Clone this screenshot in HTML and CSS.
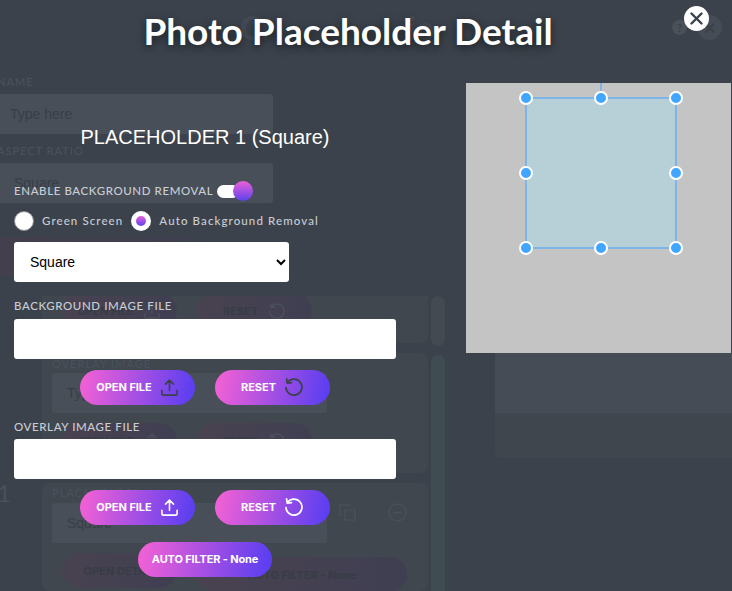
FILE: index.html
```html
<!DOCTYPE html>
<html lang="en">
<head>
<meta charset="utf-8">
<title>Photo Placeholder Detail</title>
<link rel="stylesheet" href="styles.css">
</head>
<body>
<div class="backdrop" aria-hidden="true">
  <div class="bg-top">
    <span class="bg-title">Cr<span class="bg-title-gap"></span>io</span>
    <span class="bg-help">?</span>
    <span class="bg-close">✕</span>
  </div>
  <div class="bg-main">
    <div class="bg-left">
      <div class="bg-label">NAME</div>
      <div class="bg-field bg-field-short">Type here</div>
      <div class="bg-label bg-label-gap">ASPECT RATIO</div>
      <div class="bg-field bg-field-short bg-select">Square</div>
      <div class="bg-pill bg-pill-wide"></div>
      <div class="bg-list">
        <div class="bg-num">1</div>
        <div class="bg-cards">
          <div class="bg-card bg-card-first">
            <div class="bg-pills bg-pills-first">
              <span class="bg-pill bg-pill-sm">OPEN FILE
                <svg class="bg-icon" width="18" height="18" viewBox="0 0 20 20"><path d="M10 13V2.500M5.800 6.500L10 2.200l4.200 4.300M2 13v3.200c0 1 .8 1.800 1.800 1.800h12.400c1 0 1.800-.8 1.800-1.800V13"/></svg>
              </span>
              <span class="bg-pill bg-pill-sm">RESET
                <svg class="bg-icon" width="18" height="18" viewBox="0 0 20 20"><path d="M3.400 5.600A8 8 0 1 1 2 10.500M2.600 1.800l.6 4.300 4.300-.5"/></svg>
              </span>
            </div>
          </div>
          <div class="bg-card bg-card-second">
            <div class="bg-label bg-label-second">OVERLAY IMAGE</div>
            <div class="bg-field bg-field-card">Type here</div>
            <div class="bg-pills">
              <span class="bg-pill bg-pill-sm">OPEN FILE
                <svg class="bg-icon" width="18" height="18" viewBox="0 0 20 20"><path d="M10 13V2.500M5.800 6.500L10 2.200l4.200 4.300M2 13v3.200c0 1 .8 1.800 1.800 1.800h12.400c1 0 1.800-.8 1.800-1.800V13"/></svg>
              </span>
              <span class="bg-pill bg-pill-sm">RESET
                <svg class="bg-icon" width="18" height="18" viewBox="0 0 20 20"><path d="M3.400 5.600A8 8 0 1 1 2 10.500M2.600 1.800l.6 4.300 4.300-.5"/></svg>
              </span>
            </div>
          </div>
          <div class="bg-card bg-card-third">
            <div class="bg-label bg-label-third">PLACEHOLDER</div>
            <div class="bg-field-row">
              <div class="bg-field bg-field-card">Square</div>
              <svg class="bg-icon" width="19" height="19" viewBox="0 0 19 19"><path d="M7 7h10v10H7zM12 3.500V2H2v10h1.500"/></svg>
              <svg class="bg-icon" width="19" height="19" viewBox="0 0 19 19"><circle cx="9.500" cy="9.500" r="8.500"/><path d="M5.500 9.500h8"/></svg>
            </div>
            <div class="bg-pills">
              <span class="bg-pill bg-pill-sm">OPEN DETAIL</span>
              <span class="bg-pill bg-pill-lg">AUTO FILTER - None</span>
            </div>
          </div>
        </div>
        <div class="bg-scroll">
          <div class="bg-scroll-top"></div>
          <div class="bg-scroll-thumb"></div>
        </div>
      </div>
    </div>
    <div class="bg-right">
      <div class="bg-panel"><div class="bg-panel-top"></div></div>
    </div>
  </div>
</div>

<main class="modal">
  <header class="modal-head">
    <h1 class="modal-title">Photo Placeholder Detail</h1>
    <button class="close" type="button" aria-label="Close">
      <svg width="13" height="13" viewBox="0 0 13 13"><path d="M1.500 1.500l10 10M11.500 1.500l-10 10" fill="none" stroke="#3b424c" stroke-width="2.400" stroke-linecap="round"/></svg>
    </button>
  </header>
  <div class="modal-body">
    <section class="form">
      <h2 class="form-title">PLACEHOLDER 1 (Square)</h2>
      <div class="toggle-row">
        <span class="label">ENABLE BACKGROUND REMOVAL</span>
        <span class="toggle"><span class="toggle-knob"></span></span>
      </div>
      <div class="radio-row">
        <span class="radio"></span><span class="radio-text">Green Screen</span>
        <span class="radio radio-on"><span class="radio-dot"></span></span><span class="radio-text">Auto Background Removal</span>
      </div>
      <select class="select"><option>Square</option></select>
      <div class="label label-file">BACKGROUND IMAGE FILE</div>
      <input class="file-input" type="text">
      <div class="btn-row">
        <button class="btn btn-open" type="button">OPEN FILE
          <svg class="icon" width="19" height="19" viewBox="0 0 20 20"><path d="M10 13V2.500M5.800 6.500L10 2.200l4.200 4.300M2 13v3.200c0 1 .8 1.800 1.800 1.800h12.400c1 0 1.800-.8 1.800-1.800V13" fill="none" stroke="#3b424c" stroke-width="1.700" stroke-linecap="round" stroke-linejoin="round"/></svg>
        </button>
        <button class="btn btn-reset" type="button">RESET
          <svg class="icon" width="20" height="20" viewBox="0 0 20 20"><path d="M3.400 5.600A8 8 0 1 1 2 10.500M2.600 1.800l.6 4.300 4.300-.5" fill="none" stroke="#3b424c" stroke-width="1.700" stroke-linecap="round" stroke-linejoin="round"/></svg>
        </button>
      </div>
      <div class="label label-overlay">OVERLAY IMAGE FILE</div>
      <input class="file-input" type="text">
      <div class="btn-row">
        <button class="btn btn-open" type="button">OPEN FILE
          <svg class="icon" width="19" height="19" viewBox="0 0 20 20"><path d="M10 13V2.500M5.800 6.500L10 2.200l4.200 4.300M2 13v3.200c0 1 .8 1.800 1.800 1.800h12.400c1 0 1.800-.8 1.800-1.800V13" fill="none" stroke="#fff" stroke-width="1.700" stroke-linecap="round" stroke-linejoin="round"/></svg>
        </button>
        <button class="btn btn-reset" type="button">RESET
          <svg class="icon" width="20" height="20" viewBox="0 0 20 20"><path d="M3.400 5.600A8 8 0 1 1 2 10.500M2.600 1.800l.6 4.300 4.300-.5" fill="none" stroke="#fff" stroke-width="1.700" stroke-linecap="round" stroke-linejoin="round"/></svg>
        </button>
      </div>
      <button class="btn btn-auto" type="button">AUTO FILTER - None</button>
    </section>
    <section class="canvas">
      <svg width="265" height="270" viewBox="0 0 265 270">
        <rect width="265" height="270" fill="#c4c4c4"/>
        <path d="M135 0V15" stroke="#7db6e6" stroke-width="2"/>
        <rect x="60" y="15" width="150" height="150" fill="#b7cfd6" stroke="#7db6e6" stroke-width="2"/>
        <g fill="#40a6ff" stroke="#fff" stroke-width="2">
          <circle cx="60" cy="15" r="6"/><circle cx="135" cy="15" r="6"/><circle cx="210" cy="15" r="6"/>
          <circle cx="60" cy="90" r="6"/><circle cx="210" cy="90" r="6"/>
          <circle cx="60" cy="165" r="6"/><circle cx="135" cy="165" r="6"/><circle cx="210" cy="165" r="6"/>
        </g>
      </svg>
    </section>
  </div>
</main>
</body>
</html>
```

FILE: styles.css
```css
* { box-sizing: border-box; }
html, body { margin: 0; height: 100%; }
body {
  width: 732px;
  height: 591px;
  overflow: hidden;
  position: relative;
  background: #3b424b;
  font-family: "Liberation Sans", sans-serif;
}

/* dimmed page behind the dialog */
.backdrop { width: 732px; height: 591px; overflow: hidden; color: #383e47; }
.bg-top { height: 75px; display: flex; padding-top: 8px; }
.bg-title { margin-left: 240px; width: 432px; display: flex; font: 700 32px/40px "Lato", sans-serif; color: #434a53; }
.bg-title-gap { width: 135px; }
.bg-help {
  width: 15px; height: 15px; margin-top: 12px; border-radius: 50%;
  background: #4b5159; color: #3b424b; font: 700 11px/15px "Lato", sans-serif; text-align: center;
}
.bg-close {
  width: 25px; height: 25px; margin: 7px 0 0 10px; border-radius: 50%;
  background: #464c55; color: #3b424b; font: 700 16px/25px "Lato", sans-serif; text-align: center;
}
.bg-main { display: flex; }
.bg-left { width: 509px; flex: none; margin-left: -14px; }
.bg-label { font: 500 11px/13px "Lato", sans-serif; letter-spacing: 1px; color: #4a515a; padding: 0 0 6px 11px; }
.bg-label-gap { margin-top: 10px; }
.bg-field {
  height: 40px; background: #484f58; border-radius: 3px;
  font-size: 14px; line-height: 40px; padding-left: 24px; color: #383e47;
}
.bg-field-short { width: 287px; }
.bg-select { padding-left: 28px; }
.bg-pill {
  height: 35px; border-radius: 18px;
  background: linear-gradient(100deg, #494250, #3f3f52);
  display: flex; align-items: center; justify-content: center; gap: 10px;
}
.bg-pill-wide { width: 224px; height: 38px; margin-top: 34px; background: linear-gradient(100deg, #443f4d, #3d3f4f); }
.bg-list { display: flex; margin-top: 21px; gap: 3px; }
.bg-num { width: 53px; padding: 183px 0 0 11px; font: 400 24px/28px "Lato", sans-serif; color: #4a515a; }
.bg-cards { width: 386px; flex: none; display: flex; flex-direction: column; gap: 10px; }
.bg-card { background: #40474f; border-radius: 0 0 8px 8px; padding: 0 10px; overflow: hidden; }
.bg-card-first { height: 47px; }
.bg-card-second { height: 120px; border-radius: 8px; }
.bg-card-third { height: 108px; border-radius: 8px; }
.bg-label.bg-label-second { padding: 4px 0 3px; }
.bg-label.bg-label-third { padding: 3px 0 4px; }
.bg-field-card { width: 275px; flex: none; padding-left: 15px; }
.bg-field-row { display: flex; align-items: flex-start; gap: 31px; }
.bg-field-row .bg-field { margin-right: -20px; }
.bg-pills { display: flex; gap: 20px; padding-left: 10px; margin-top: 10px; font: 700 11px "Inter", sans-serif; color: #373c45; }
.bg-pills-first { margin-top: -3px; }
.bg-pill-sm { width: 115px; }
.bg-pill-lg { width: 210px; margin-top: 4px; }
.bg-icon { fill: none; stroke: #4a505a; stroke-width: 1.600; stroke-linecap: round; stroke-linejoin: round; flex: none; }
.bg-scroll { width: 14px; flex: none; }
.bg-scroll-top { height: 50px; background: #434a52; border-radius: 7px; }
.bg-scroll-thumb { height: 300px; margin-top: 9px; background: #3f4d53; border-radius: 7px; }
.bg-right { flex: 1; padding-top: 278px; }
.bg-panel { width: 237px; height: 105px; background: #3f464e; border-radius: 0 0 0 5px; }
.bg-panel-top { height: 60px; background: #454c55; }

/* dialog */
.modal { position: absolute; inset: 0; color: #fff; }
.modal-head { height: 83px; position: relative; }
.modal-title {
  margin: 0; padding-top: 9px; width: 696px; text-align: center;
  font: 700 37px/44px "Lato", sans-serif;
  text-shadow: 0 3px 8px rgba(0,0,0,.55);
}
.close {
  position: absolute; left: 684px; top: 6px; width: 25px; height: 25px;
  border: 0; border-radius: 50%; padding: 0; background: #fff;
  display: flex; align-items: center; justify-content: center;
}
.modal-body { display: flex; }
.form { width: 466px; flex: none; padding-left: 14px; }
.form-title {
  width: 382px; margin: 42px 0 0; text-align: center;
  font: 400 20px/24px "Liberation Sans", sans-serif;
}
.label {
  font: 500 11.500px/14px "Lato", sans-serif; letter-spacing: .6px; color: #c9cdd4;
}
.toggle-row { display: flex; align-items: center; margin-top: 32px; height: 20px; }
.toggle { width: 22px; height: 13px; margin-left: 4px; border-radius: 7px; background: #fff; position: relative; display: block; }
.toggle-knob {
  position: absolute; left: 16px; top: -3.500px; width: 20px; height: 20px; border-radius: 50%;
  background: linear-gradient(#ea60d8, #5d41ef);
}
.radio-row { display: flex; align-items: center; margin-top: 10px; height: 20px; }
.radio {
  width: 20px; height: 20px; border-radius: 50%; background: #fff; border: 1px solid #8a8d92;
  display: flex; align-items: center; justify-content: center; flex: none;
}
.radio-on { border: 0; margin-left: 8px; }
.radio-dot { width: 10px; height: 10px; border-radius: 50%; background: linear-gradient(#ea60d8, #5d41ef); }
.radio-text { font: 500 11.500px/14px "Lato", sans-serif; letter-spacing: 1.100px; color: #c9cdd4; margin-left: 8px; }
.select {
  display: block; width: 275px; height: 40px; margin-top: 11px; padding-left: 12px;
  background: #fff; border: 0; border-radius: 3px; color: #000;
  font: 400 14px "Liberation Sans", sans-serif;
}
.label-file { margin-top: 17px; padding-bottom: 1px; }
.label-overlay { margin-top: 15px; }
.file-input {
  display: block; width: 382px; height: 40px; margin-top: 5px;
  background: #fff; border: 0; border-radius: 3px;
}
.btn-row { display: flex; gap: 20px; margin-top: 11px; padding-left: 66px; }
.btn {
  width: 115px; height: 35px; border: 0; border-radius: 18px; padding: 0 0 1px;
  display: flex; align-items: center; justify-content: center;
  background: linear-gradient(100deg, #ee60d6 5%, #5d3ff0 95%);
  color: #fff; font: 700 11px "Inter", sans-serif; letter-spacing: -.05px;
}
.icon { margin-left: 8px; flex: none; }
.btn-auto { width: 134px; margin: 17px 0 0 124px; letter-spacing: -.15px; }
.canvas { width: 265px; height: 270px; flex: none; }
.canvas svg { display: block; }
```
